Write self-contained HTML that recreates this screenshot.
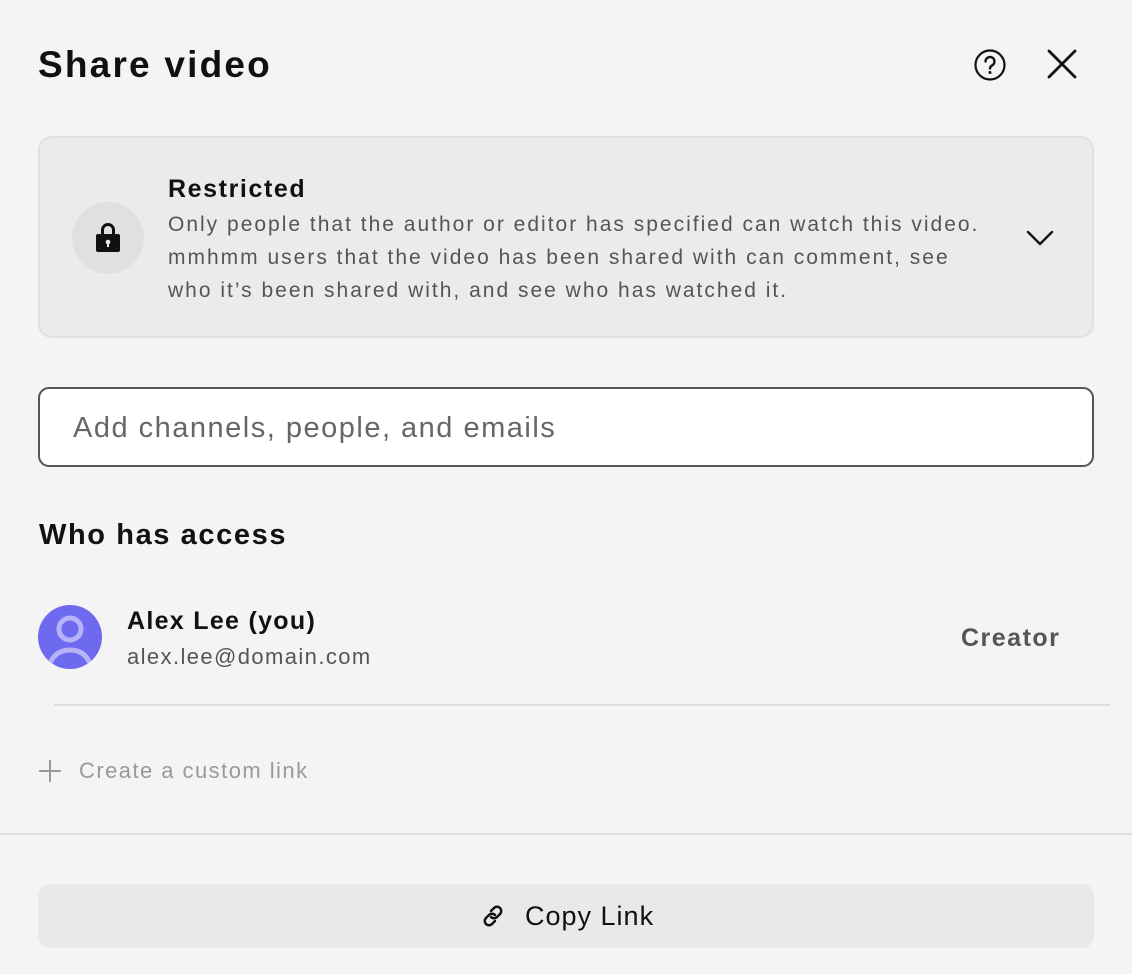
<!DOCTYPE html>
<html><head><meta charset="utf-8"><style>
*{box-sizing:border-box;margin:0;padding:0}
body{width:1132px;height:974px;background:#f4f4f4;font-family:"Liberation Sans",Arial,sans-serif;position:relative;overflow:hidden;color:#111}
.a{position:absolute;white-space:nowrap}
</style></head><body>
<div class="a" style="left:38px;top:42px;font-size:37px;font-weight:bold;line-height:46px;letter-spacing:2.2px">Share video</div>
<svg class="a" style="left:972px;top:47px" width="36" height="36" viewBox="0 0 36 36"><circle cx="18" cy="18" r="14.5" fill="none" stroke="#111" stroke-width="2.2"/><path d="M13.5 14.5a4.5 4.5 0 1 1 6.5 4c-1.4.8-2 1.5-2 3" fill="none" stroke="#111" stroke-width="2.4" stroke-linecap="round"/><circle cx="18" cy="25.5" r="1.5" fill="#111"/></svg>
<svg class="a" style="left:1046px;top:48px" width="32" height="32" viewBox="0 0 32 32"><path d="M3 3L29 29M29 3L3 29" stroke="#111" stroke-width="2.8" stroke-linecap="round"/></svg>

<div class="a" style="left:38px;top:136px;width:1056px;height:202px;background:#ebebeb;border:2px solid #e0e0e0;border-radius:14px"></div>
<div class="a" style="left:72px;top:202px;width:72px;height:72px;border-radius:50%;background:#e0e0e0"></div>
<svg class="a" style="left:94px;top:219px" width="28" height="36" viewBox="0 0 28 36"><path d="M8.5 16V11a5.5 5.5 0 0 1 11 0v5" fill="none" stroke="#111" stroke-width="3"/><rect x="2" y="15" width="24" height="18" rx="2" fill="#111"/><circle cx="14" cy="23" r="2.3" fill="#ebebeb"/><rect x="13" y="23" width="2" height="5" fill="#ebebeb"/></svg>
<div class="a" style="left:168px;top:174px;font-size:25px;font-weight:bold;line-height:30px;letter-spacing:1.6px">Restricted</div>
<div class="a" style="left:168px;top:208px;font-size:21px;line-height:33px;color:#555;letter-spacing:2px">Only people that the author or editor has specified can watch this video.<br>mmhmm users that the video has been shared with can comment, see<br>who it’s been shared with, and see who has watched it.</div>
<svg class="a" style="left:1026px;top:229px" width="28" height="18" viewBox="0 0 28 18"><path d="M2 3L14 15L26 3" fill="none" stroke="#111" stroke-width="2.4" stroke-linecap="round" stroke-linejoin="round"/></svg>

<div class="a" style="left:38px;top:387px;width:1056px;height:80px;background:#fff;border:2px solid #555;border-radius:11px"></div>
<div class="a" style="left:73px;top:410px;font-size:29px;line-height:36px;color:#666;letter-spacing:1.5px">Add channels, people, and emails</div>

<div class="a" style="left:39px;top:517px;font-size:29px;font-weight:bold;line-height:36px;letter-spacing:1.6px">Who has access</div>

<svg class="a" style="left:38px;top:605px" width="64" height="64" viewBox="0 0 64 64"><defs><clipPath id="c"><circle cx="32" cy="32" r="32"/></clipPath></defs><circle cx="32" cy="32" r="32" fill="#6e6af0"/><g clip-path="url(#c)" fill="none" stroke="#b6b4f7" stroke-width="5"><circle cx="32" cy="24" r="11"/><path d="M11 66c0-13 9-21 21-21s21 8 21 21"/></g></svg>
<div class="a" style="left:127px;top:606px;font-size:25px;font-weight:bold;line-height:30px;letter-spacing:1.3px">Alex Lee (you)</div>
<div class="a" style="left:127px;top:643px;font-size:22px;line-height:27px;color:#555;letter-spacing:1.4px">alex.lee@domain.com</div>
<div class="a" style="left:961px;top:623px;font-size:25px;font-weight:bold;line-height:30px;color:#555;letter-spacing:1.5px">Creator</div>

<div class="a" style="left:54px;top:704px;width:1056px;height:2px;background:#ddd"></div>
<svg class="a" style="left:38px;top:759px" width="24" height="24" viewBox="0 0 24 24"><path d="M12 1V23M1 12H23" stroke="#999" stroke-width="2"/></svg>
<div class="a" style="left:79px;top:757px;font-size:22px;line-height:27px;color:#999;letter-spacing:1.45px">Create a custom link</div>

<div class="a" style="left:0;top:833px;width:1132px;height:2px;background:#ddd"></div>
<div class="a" style="left:38px;top:884px;width:1056px;height:64px;background:#e9e9e9;border-radius:12px"></div>
<svg class="a" style="left:479px;top:902px" width="28" height="28" viewBox="0 0 28 28" fill="none" stroke="#111" stroke-width="2.4" stroke-linecap="round"><path d="M12 9l3-3a4.2 4.2 0 0 1 6 6l-3 3a4.2 4.2 0 0 1-6 0"/><path d="M16 19l-3 3a4.2 4.2 0 0 1-6-6l3-3a4.2 4.2 0 0 1 6 0"/></svg>
<div class="a" style="left:525px;top:900px;font-size:27px;line-height:32px;letter-spacing:1px">Copy Link</div>
</body></html>
